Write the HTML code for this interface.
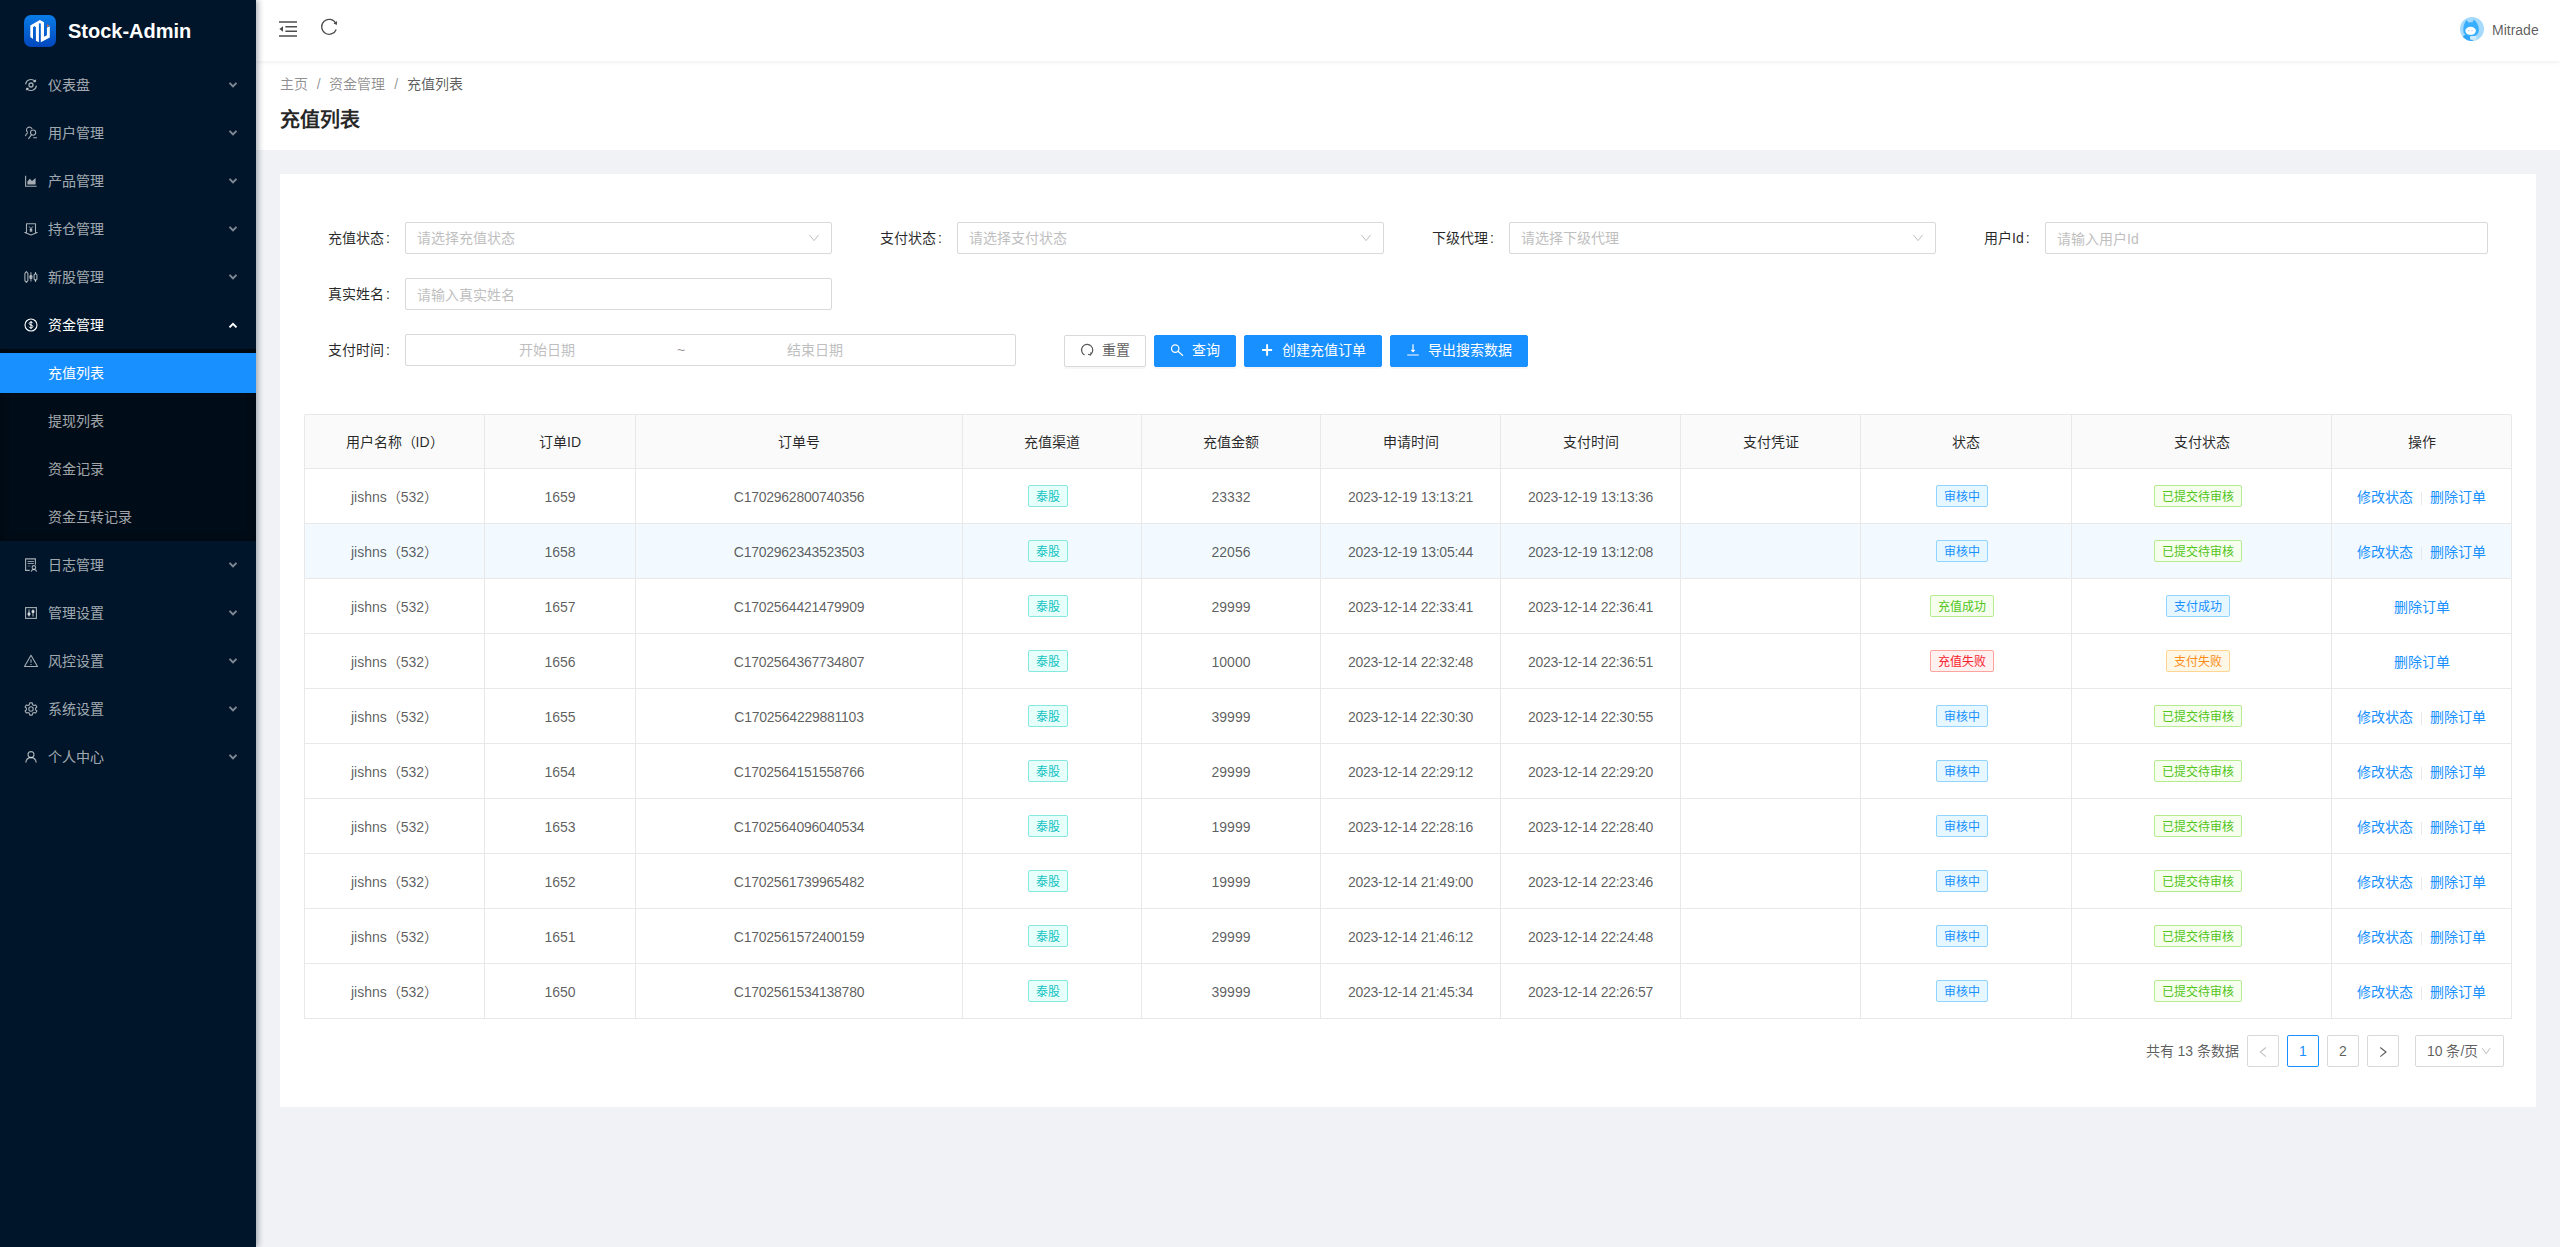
<!DOCTYPE html>
<html lang="zh-CN">
<head>
<meta charset="utf-8">
<title>Stock-Admin</title>
<style>
*{box-sizing:border-box;margin:0;padding:0}
html,body{width:2560px;height:1247px;overflow:hidden}
body{position:relative;background:#f0f2f5;font-family:"Liberation Sans",sans-serif;font-size:14px;color:rgba(0,0,0,.65);line-height:1.5}
.abs{position:absolute}
/* sidebar */
#side{position:absolute;left:0;top:0;width:256px;height:1247px;background:#001529;box-shadow:2px 0 6px rgba(0,21,41,.35);z-index:5}
#logo{position:absolute;left:24px;top:15px;width:32px;height:32px;border-radius:7px;background:linear-gradient(180deg,#0a7de8 0%,#0047bd 100%)}
#brand{position:absolute;left:68px;top:11px;height:40px;line-height:40px;font-size:20px;font-weight:700;color:#fff;white-space:nowrap}
.m{position:absolute;left:0;width:256px;height:40px;line-height:40px;color:rgba(255,255,255,.65);white-space:nowrap}
.m .mi{position:absolute;left:24px;top:13px}
.m .t{position:absolute;left:48px;top:0}
.m .arr{position:absolute;left:228px;top:15.5px}
.m.on{color:#fff}
#sub{position:absolute;left:0;top:349px;width:256px;height:192px;background:#000c17;box-shadow:inset 0 2px 8px rgba(0,0,0,.45)}
.m.sel{background:#1890ff;color:#fff}
/* header */
#hdr{position:absolute;left:256px;top:0;width:2304px;height:61px;background:#fff;box-shadow:0 1px 4px rgba(0,21,41,.08);z-index:3}
#ph{position:absolute;left:256px;top:61px;width:2304px;height:89px;background:#fff}
#bc{position:absolute;left:24px;top:12px;height:22px;line-height:22px;color:rgba(0,0,0,.45);white-space:nowrap}
#bc .sep{margin:0 8.8px}
#bc .cur{color:rgba(0,0,0,.65)}
#ttl{position:absolute;left:24px;top:43px;height:32px;line-height:32px;font-size:20px;font-weight:700;color:rgba(0,0,0,.85);white-space:nowrap}
#user{position:absolute;left:2236px;top:18.5px;height:22px;line-height:22px;color:rgba(0,0,0,.65)}
/* card */
#card{position:absolute;left:280px;top:174px;width:2256px;height:933px;background:#fff}
.lb{position:absolute;height:32px;line-height:32px;color:rgba(0,0,0,.85);white-space:nowrap}
.in{position:absolute;height:32px;border:1px solid #d9d9d9;border-radius:2px;background:#fff;line-height:30px;padding:0 11px;color:#bfbfbf;white-space:nowrap;overflow:hidden}
.in .dn{position:absolute;right:11px;top:10px}
.btn{position:absolute;top:161px;height:32px;line-height:28px;border:1px solid #1890ff;background:#1890ff;color:#fff;border-radius:2px;white-space:nowrap;text-align:left;padding-left:15px;box-shadow:0 2px 0 rgba(0,0,0,.035)}
.btn.df{background:#fff;border-color:#d9d9d9;color:rgba(0,0,0,.65)}
.btn svg{position:absolute;left:15px;top:7px}
.btn span{position:absolute;left:37px;top:0}
/* table */
table{position:absolute;left:24px;top:240px;width:2208px;table-layout:fixed;border-collapse:separate;border-spacing:0;border-left:1px solid #e8e8e8;border-top:1px solid #e8e8e8;border-radius:2px 2px 0 0}
th,td{border-right:1px solid #e8e8e8;border-bottom:1px solid #e8e8e8;text-align:center;padding:0;white-space:nowrap;overflow:hidden;vertical-align:middle}
th{height:54px;background:#fafafa;color:rgba(0,0,0,.85);font-weight:400;padding-top:2px}
td{height:55px;color:rgba(0,0,0,.65);padding-top:2px}
tr.hv td{background:#f2faff}
td.n{letter-spacing:-0.25px}
.tag{display:inline-block;height:22px;line-height:22px;padding:0 7px;font-size:12px;border:1px solid;border-radius:2px;margin-right:8px;vertical-align:middle;position:relative;top:-1px}
.cy{color:#13c2c2;background:#e6fffb;border-color:#87e8de}
.bl{color:#1890ff;background:#e6f7ff;border-color:#91d5ff}
.gr{color:#52c41a;background:#f6ffed;border-color:#b7eb8f}
.rd{color:#f5222d;background:#fff1f0;border-color:#ffa39e}
.og{color:#fa8c16;background:#fff7e6;border-color:#ffd591}
a{color:#1890ff;text-decoration:none}
.dv{display:inline-block;width:1px;height:12.6px;background:#e8e8e8;margin:0 8px;vertical-align:middle;position:relative;top:0.5px}
/* pagination */
.pg{position:absolute;top:861px;width:32px;height:32px;line-height:30px;border:1px solid #d9d9d9;border-radius:2px;text-align:center;background:#fff;color:rgba(0,0,0,.65)}
.pg.on{border-color:#1890ff;color:#1890ff}
.pg svg{position:absolute;left:10px;top:9px}
#tot{position:absolute;top:861px;right:297px;height:32px;line-height:32px;white-space:nowrap}
</style>
</head>
<body>

<div id="side">
<div id="logo"><svg viewBox="0 0 32 32" width="32" height="32"><path d="M6.3 10.6L15.9 5.1L20 7.2V21.8L22.9 20.2V12.8L25.8 11.2V22.5L16.8 27.3V8.6L15.9 8.2L14.9 8.6V27.3L11.9 25.7V12.2L10.4 11.1L9 12.2V23.9L6.3 22.1Z" fill="#fff"/><path d="M22.9 9.3L25.2 10.7L23.3 11.9Z" fill="#ff6a1a"/></svg></div>
<div id="brand">Stock-Admin</div>
<div class="m" style="top:65px"><svg class="mi" viewBox="0 0 14 14" width="14" height="14" fill="none" stroke="rgba(255,255,255,0.65)" stroke-width="1.1" style="color:rgba(255,255,255,0.65)"><path d="M1.6 6.4A5.5 5.5 0 0 1 11 3.2M12.4 7.6A5.5 5.5 0 0 1 3 10.8"/><path d="M11.6 1.7v2.2H9.4zM2.4 12.3v-2.2h2.2z" fill="currentColor" stroke-width=".6"/><circle cx="7" cy="7" r="2" stroke-width="1.3"/></svg><span class="t">仪表盘</span><svg class="arr" viewBox="0 0 10 8" width="10" height="8" fill="none" stroke="rgba(255,255,255,.5)" stroke-width="2"><polyline points="1.5,1.9 5,5.4 8.5,1.9"/></svg></div>
<div class="m" style="top:113px"><svg class="mi" viewBox="0 0 14 14" width="14" height="14" fill="none" stroke="rgba(255,255,255,0.65)" stroke-width="1.1" style="color:rgba(255,255,255,0.65)"><path d="M8.1 3A2.9 2.9 0 1 0 3.6 6.3"/><path d="M3.8 6.8C2.6 7.600000000000001 1.7 8.8 1.4 10.2"/><circle cx="9.1" cy="6.6" r="2.6"/><path d="M7.4 8.8L4.4 12.8M9.2 11.7h3.8"/></svg><span class="t">用户管理</span><svg class="arr" viewBox="0 0 10 8" width="10" height="8" fill="none" stroke="rgba(255,255,255,.5)" stroke-width="2"><polyline points="1.5,1.9 5,5.4 8.5,1.9"/></svg></div>
<div class="m" style="top:161px"><svg class="mi" viewBox="0 0 14 14" width="14" height="14" fill="none" stroke="rgba(255,255,255,0.65)" stroke-width="1.1" style="color:rgba(255,255,255,0.65)"><path d="M1.6 1.8v10.4h11"/><path d="M3.4 10.6V7.4l2.4-2.6 2.2 2.2 3.6-3v6.6z" fill="currentColor" stroke="none"/></svg><span class="t">产品管理</span><svg class="arr" viewBox="0 0 10 8" width="10" height="8" fill="none" stroke="rgba(255,255,255,.5)" stroke-width="2"><polyline points="1.5,1.9 5,5.4 8.5,1.9"/></svg></div>
<div class="m" style="top:209px"><svg class="mi" viewBox="0 0 14 14" width="14" height="14" fill="none" stroke="rgba(255,255,255,0.65)" stroke-width="1.1" style="color:rgba(255,255,255,0.65)"><path d="M0.8 10.6H2.5V1.7h9v8.9h1.7L7 12.9z" stroke-linejoin="round"/><path d="M5.2 4.5L7 6.8l1.8-2.3M7 6.8V10M5.6 7.6h2.8M5.6 8.9h2.8" stroke-width="1"/></svg><span class="t">持仓管理</span><svg class="arr" viewBox="0 0 10 8" width="10" height="8" fill="none" stroke="rgba(255,255,255,.5)" stroke-width="2"><polyline points="1.5,1.9 5,5.4 8.5,1.9"/></svg></div>
<div class="m" style="top:257px"><svg class="mi" viewBox="0 0 14 14" width="14" height="14" fill="none" stroke="rgba(255,255,255,0.65)" stroke-width="1.1" style="color:rgba(255,255,255,0.65)"><path d="M2.4 1.6L3.9 3.4v7.2L2.4 12.4.9 10.6V3.4z" stroke-linejoin="round"/><path d="M6.9 2.2v9.4" stroke-width="1.5" opacity=".7"/><rect x="5.2" y="4.9" width="3.4" height="4.2" rx="1.3" fill="currentColor" opacity=".8" stroke="none"/><path d="M11.5 2v2.2M11.5 9.8V12"/><rect x="10.1" y="4" width="2.8" height="5.9" rx="1"/></svg><span class="t">新股管理</span><svg class="arr" viewBox="0 0 10 8" width="10" height="8" fill="none" stroke="rgba(255,255,255,.5)" stroke-width="2"><polyline points="1.5,1.9 5,5.4 8.5,1.9"/></svg></div>
<div class="m on" style="top:305px"><svg class="mi" viewBox="0 0 14 14" width="14" height="14" fill="none" stroke="#fff" stroke-width="1.1" style="color:#fff"><circle cx="7" cy="7" r="6"/><path d="M8.8 5.2C8.4 4.4 7.8 4.1 7 4.1c-1.1 0-1.9.6-1.9 1.4 0 2 3.8.9 3.8 3 0 .8-.8 1.4-1.9 1.4-.9 0-1.6-.4-2-1.2M7 3v8" stroke-width="1"/></svg><span class="t">资金管理</span><svg class="arr" viewBox="0 0 10 8" width="10" height="8" fill="none" stroke="#fff" stroke-width="2"><polyline points="1.5,6.4 5,2.9 8.5,6.4"/></svg></div>
<div id="sub"></div>
<div class="m sel" style="top:353px"><span class="t">充值列表</span></div>
<div class="m" style="top:401px"><span class="t">提现列表</span></div>
<div class="m" style="top:449px"><span class="t">资金记录</span></div>
<div class="m" style="top:497px"><span class="t">资金互转记录</span></div>
<div class="m" style="top:545px"><svg class="mi" viewBox="0 0 14 14" width="14" height="14" fill="none" stroke="rgba(255,255,255,0.65)" stroke-width="1.1" style="color:rgba(255,255,255,0.65)"><path d="M5.8 12.4H1.6V0.9h9.8v5.8"/><path d="M3.6 3.5h6.2M3.6 5.5h6.2" stroke-width="0.9"/><path d="M3.6 8h3" stroke-width=".9" opacity=".6"/><circle cx="9.9" cy="9.4" r="1.8"/><path d="M7.2 13.6c.3-1.5 1.3-2.2 2.7-2.2s2.400000000000001.7 2.7 2.2"/></svg><span class="t">日志管理</span><svg class="arr" viewBox="0 0 10 8" width="10" height="8" fill="none" stroke="rgba(255,255,255,.5)" stroke-width="2"><polyline points="1.5,1.9 5,5.4 8.5,1.9"/></svg></div>
<div class="m" style="top:593px"><svg class="mi" viewBox="0 0 14 14" width="14" height="14" fill="none" stroke="rgba(255,255,255,0.65)" stroke-width="1.1" style="color:rgba(255,255,255,0.65)"><rect x="1.6" y="1.6" width="10.8" height="10.8"/><path d="M5 3.6v6.8M9 3.6v6.8"/><circle cx="5" cy="8" r="1.1" fill="currentColor"/><circle cx="9" cy="5.6" r="1.1" fill="currentColor"/></svg><span class="t">管理设置</span><svg class="arr" viewBox="0 0 10 8" width="10" height="8" fill="none" stroke="rgba(255,255,255,.5)" stroke-width="2"><polyline points="1.5,1.9 5,5.4 8.5,1.9"/></svg></div>
<div class="m" style="top:641px"><svg class="mi" viewBox="0 0 14 14" width="14" height="14" fill="none" stroke="rgba(255,255,255,0.65)" stroke-width="1.1" style="color:rgba(255,255,255,0.65)"><path d="M7 1.3L13.5 12.5H.5z" stroke-linejoin="round"/><path d="M7 5.4v3.4M7 10v1"/></svg><span class="t">风控设置</span><svg class="arr" viewBox="0 0 10 8" width="10" height="8" fill="none" stroke="rgba(255,255,255,.5)" stroke-width="2"><polyline points="1.5,1.9 5,5.4 8.5,1.9"/></svg></div>
<div class="m" style="top:689px"><svg class="mi" viewBox="0 0 14 14" width="14" height="14" fill="none" stroke="rgba(255,255,255,0.65)" stroke-width="1.1" style="color:rgba(255,255,255,0.65)"><circle cx="7" cy="7" r="2.2"/><path d="M5.8 .9h2.4l.45 1.8 1.3.75 1.75-.55 1.2 2.1-1.3 1.2v1.6l1.3 1.2-1.2 2.1-1.75-.55-1.3.75-.45 1.8H5.8l-.45-1.8-1.3-.75-1.75.55-1.2-2.1 1.3-1.2V6.2L1.1 5l1.2-2.1 1.75.55 1.3-.75z" stroke-linejoin="round"/></svg><span class="t">系统设置</span><svg class="arr" viewBox="0 0 10 8" width="10" height="8" fill="none" stroke="rgba(255,255,255,.5)" stroke-width="2"><polyline points="1.5,1.9 5,5.4 8.5,1.9"/></svg></div>
<div class="m" style="top:737px"><svg class="mi" viewBox="0 0 14 14" width="14" height="14" fill="none" stroke="rgba(255,255,255,0.65)" stroke-width="1.1" style="color:rgba(255,255,255,0.65)"><circle cx="7" cy="4.6" r="3"/><path d="M1.8 12.6c.3-3 2.400000000000001-5 5.2-5s4.9 2 5.2 5"/></svg><span class="t">个人中心</span><svg class="arr" viewBox="0 0 10 8" width="10" height="8" fill="none" stroke="rgba(255,255,255,.5)" stroke-width="2"><polyline points="1.5,1.9 5,5.4 8.5,1.9"/></svg></div>
</div>
<div id="hdr">
<svg class="abs" style="left:23px;top:21px" viewBox="0 0 18 16" width="18" height="16" fill="none" stroke="#4d4d4d" stroke-width="1.6"><path d="M0 1h18M6.4 5.7h11.6M6.4 10.3h11.6M0 15h18"/><path d="M0.4 8l3.6-2.7v5.4z" fill="#4d4d4d" stroke="none"/></svg>
<svg class="abs" style="left:64px;top:18px" viewBox="0 0 18 18" width="18" height="18" fill="none" stroke="#4d4d4d" stroke-width="1.3"><path d="M15.8 5.3A7.5 7.5 0 1 0 16.2 11.4"/><path d="M17.1 3.1L16.9 6.9L13.5 5.6Z" fill="#4d4d4d" stroke="none"/></svg>
<svg class="abs" style="left:2204px;top:17px;border-radius:50%;overflow:hidden" viewBox="0 0 24 24" width="24" height="24"><g><rect width="24" height="24" fill="#a6dafc"/><path d="M2 24c-.5-3 1-5.500000000000001 4-6.5l5 1.5 2 5z" fill="#2fa6fb"/><path d="M3.6 15.5C2.6 11 3.800000000000001 7 6.3 3l2.8 2.800000000000001c1-.4 2-.5 3.200000000000001-.4L13.800000000000002 2.500000000000001c3 2.5 5 6 5.1 10 .1 4-2.5 6.800000000000001-7 6.800000000000001-4.500000000000001 0-7.5-1.5-8.3-3.8z" fill="#38aeff"/><ellipse cx="10.6" cy="13.8" rx="5.3" ry="4" fill="#fff"/><rect x="10" y="19" width="6.5" height="3.8" rx="1" fill="#cfeafd"/><circle cx="8.8" cy="13.6" r=".55" fill="#8fb5e6"/><circle cx="12" cy="13.8" r=".55" fill="#8fb5e6"/></g></svg>
<div id="user">Mitrade</div>
</div>
<div id="ph"><div id="bc"><span>主页</span><span class="sep">/</span><span>资金管理</span><span class="sep">/</span><span class="cur">充值列表</span></div><div id="ttl">充值列表</div></div>
<div id="card">
<div class="lb" style="left:48px;top:48px">充值状态<span style="margin:0 8px 0 2px">:</span></div>
<div class="in" style="left:125px;top:48px;width:427px">请选择充值状态<svg class="dn" viewBox="0 0 12 12" width="12" height="12" fill="none" stroke="#bfbfbf" stroke-width="1"><polyline points="1.4,1.8 6,7.6 10.6,1.8"/></svg></div>
<div class="lb" style="left:600px;top:48px">支付状态<span style="margin:0 8px 0 2px">:</span></div>
<div class="in" style="left:677px;top:48px;width:427px">请选择支付状态<svg class="dn" viewBox="0 0 12 12" width="12" height="12" fill="none" stroke="#bfbfbf" stroke-width="1"><polyline points="1.4,1.8 6,7.6 10.6,1.8"/></svg></div>
<div class="lb" style="left:1152px;top:48px">下级代理<span style="margin:0 8px 0 2px">:</span></div>
<div class="in" style="left:1229px;top:48px;width:427px">请选择下级代理<svg class="dn" viewBox="0 0 12 12" width="12" height="12" fill="none" stroke="#bfbfbf" stroke-width="1"><polyline points="1.4,1.8 6,7.6 10.6,1.8"/></svg></div>
<div class="lb" style="left:1704px;top:48px">用户Id<span style="margin:0 8px 0 2px">:</span></div>
<div class="in" style="left:1765px;top:48px;width:443px;line-height:32px">请输入用户Id</div>
<div class="lb" style="left:48px;top:104px">真实姓名<span style="margin:0 8px 0 2px">:</span></div>
<div class="in" style="left:125px;top:104px;width:427px;line-height:32px">请输入真实姓名</div>
<div class="lb" style="left:48px;top:160px">支付时间<span style="margin:0 8px 0 2px">:</span></div>
<div class="in" style="left:125px;top:160px;width:611px;padding:0"><span class="abs" style="left:11px;width:259px;text-align:center">开始日期</span><span class="abs" style="left:270px;width:10px;text-align:center;color:rgba(0,0,0,.45)">~</span><span class="abs" style="left:279px;width:259px;text-align:center">结束日期</span></div>
<div class="btn df" style="left:784px;width:82px"><svg viewBox="0 0 14 14" width="14" height="14" fill="none" stroke="#595959" stroke-width="1.2"><path d="M4.6 12A5.6 5.6 0 1 1 10.4 11.6"/><path d="M11.2 9.2l-.6 2.8-2.6-.8" stroke-width="1.1"/></svg><span>重置</span></div>
<div class="btn" style="left:874px;width:82px"><svg viewBox="0 0 14 14" width="14" height="14" fill="none" stroke="#fff" stroke-width="1.2"><circle cx="5.2" cy="5.6" r="3.7"/><path d="M8 8.3l5 4.4"/></svg><span>查询</span></div>
<div class="btn" style="left:964px;width:138px"><svg viewBox="0 0 14 14" width="14" height="14" fill="none" stroke="#fff" stroke-width="1.9"><path d="M7.1 1.2v11.6M2.1 7h10"/></svg><span>创建充值订单</span></div>
<div class="btn" style="left:1110px;width:138px"><svg viewBox="0 0 14 14" width="14" height="14" fill="none" stroke="#fff" stroke-width="1.2"><path d="M7 1.3v7.2M5.3 6.8L7 8.6l1.7-1.8M1.2 12h11.6"/></svg><span>导出搜索数据</span></div>
<table><colgroup><col style="width:180px"><col style="width:151px"><col style="width:327px"><col style="width:179px"><col style="width:179px"><col style="width:180px"><col style="width:180px"><col style="width:180px"><col style="width:211px"><col style="width:260px"><col style="width:180px"></colgroup>
<thead><tr><th>用户名称（ID）</th><th>订单ID</th><th>订单号</th><th>充值渠道</th><th>充值金额</th><th>申请时间</th><th>支付时间</th><th>支付凭证</th><th>状态</th><th>支付状态</th><th>操作</th></tr></thead><tbody>
<tr><td>jishns（532）</td><td>1659</td><td class=n>C1702962800740356</td><td><span class="tag cy">泰股</span></td><td>23332</td><td class=n>2023-12-19 13:13:21</td><td class=n>2023-12-19 13:13:36</td><td></td><td><span class="tag bl">审核中</span></td><td><span class="tag gr">已提交待审核</span></td><td><a>修改状态</a><span class="dv"></span><a>删除订单</a></td></tr>
<tr class=hv><td>jishns（532）</td><td>1658</td><td class=n>C1702962343523503</td><td><span class="tag cy">泰股</span></td><td>22056</td><td class=n>2023-12-19 13:05:44</td><td class=n>2023-12-19 13:12:08</td><td></td><td><span class="tag bl">审核中</span></td><td><span class="tag gr">已提交待审核</span></td><td><a>修改状态</a><span class="dv"></span><a>删除订单</a></td></tr>
<tr><td>jishns（532）</td><td>1657</td><td class=n>C1702564421479909</td><td><span class="tag cy">泰股</span></td><td>29999</td><td class=n>2023-12-14 22:33:41</td><td class=n>2023-12-14 22:36:41</td><td></td><td><span class="tag gr">充值成功</span></td><td><span class="tag bl">支付成功</span></td><td><a>删除订单</a></td></tr>
<tr><td>jishns（532）</td><td>1656</td><td class=n>C1702564367734807</td><td><span class="tag cy">泰股</span></td><td>10000</td><td class=n>2023-12-14 22:32:48</td><td class=n>2023-12-14 22:36:51</td><td></td><td><span class="tag rd">充值失败</span></td><td><span class="tag og">支付失败</span></td><td><a>删除订单</a></td></tr>
<tr><td>jishns（532）</td><td>1655</td><td class=n>C1702564229881103</td><td><span class="tag cy">泰股</span></td><td>39999</td><td class=n>2023-12-14 22:30:30</td><td class=n>2023-12-14 22:30:55</td><td></td><td><span class="tag bl">审核中</span></td><td><span class="tag gr">已提交待审核</span></td><td><a>修改状态</a><span class="dv"></span><a>删除订单</a></td></tr>
<tr><td>jishns（532）</td><td>1654</td><td class=n>C1702564151558766</td><td><span class="tag cy">泰股</span></td><td>29999</td><td class=n>2023-12-14 22:29:12</td><td class=n>2023-12-14 22:29:20</td><td></td><td><span class="tag bl">审核中</span></td><td><span class="tag gr">已提交待审核</span></td><td><a>修改状态</a><span class="dv"></span><a>删除订单</a></td></tr>
<tr><td>jishns（532）</td><td>1653</td><td class=n>C1702564096040534</td><td><span class="tag cy">泰股</span></td><td>19999</td><td class=n>2023-12-14 22:28:16</td><td class=n>2023-12-14 22:28:40</td><td></td><td><span class="tag bl">审核中</span></td><td><span class="tag gr">已提交待审核</span></td><td><a>修改状态</a><span class="dv"></span><a>删除订单</a></td></tr>
<tr><td>jishns（532）</td><td>1652</td><td class=n>C1702561739965482</td><td><span class="tag cy">泰股</span></td><td>19999</td><td class=n>2023-12-14 21:49:00</td><td class=n>2023-12-14 22:23:46</td><td></td><td><span class="tag bl">审核中</span></td><td><span class="tag gr">已提交待审核</span></td><td><a>修改状态</a><span class="dv"></span><a>删除订单</a></td></tr>
<tr><td>jishns（532）</td><td>1651</td><td class=n>C1702561572400159</td><td><span class="tag cy">泰股</span></td><td>29999</td><td class=n>2023-12-14 21:46:12</td><td class=n>2023-12-14 22:24:48</td><td></td><td><span class="tag bl">审核中</span></td><td><span class="tag gr">已提交待审核</span></td><td><a>修改状态</a><span class="dv"></span><a>删除订单</a></td></tr>
<tr><td>jishns（532）</td><td>1650</td><td class=n>C1702561534138780</td><td><span class="tag cy">泰股</span></td><td>39999</td><td class=n>2023-12-14 21:45:34</td><td class=n>2023-12-14 22:26:57</td><td></td><td><span class="tag bl">审核中</span></td><td><span class="tag gr">已提交待审核</span></td><td><a>修改状态</a><span class="dv"></span><a>删除订单</a></td></tr>
</tbody></table>
<div id="tot">共有 13 条数据</div>
<div class="pg" style="left:1967px"><svg style="left:9px;top:9px" viewBox="0 0 14 14" width="14" height="14" fill="none" stroke="#bfbfbf" stroke-width="1.1"><polyline points="8.9,2.5 3.4,7.05 8.9,11.6"/></svg></div>
<div class="pg on" style="left:2007px">1</div>
<div class="pg" style="left:2047px">2</div>
<div class="pg" style="left:2087px"><svg style="left:9px;top:9px" viewBox="0 0 14 14" width="14" height="14" fill="none" stroke="#595959" stroke-width="1.1"><polyline points="3.3,2.5 9,7.05 3.3,11.6"/></svg></div>
<div class="pg" style="left:2135px;width:89px;text-align:left;padding-left:11px;white-space:nowrap">10 条/页<svg style="left:64px;top:10px" viewBox="0 0 12 12" width="12" height="12" fill="none" stroke="#bfbfbf" stroke-width="1"><polyline points="2.2,2.1 6.2,7.8 10.1,2.1"/></svg></div>
</div>
</body></html>
